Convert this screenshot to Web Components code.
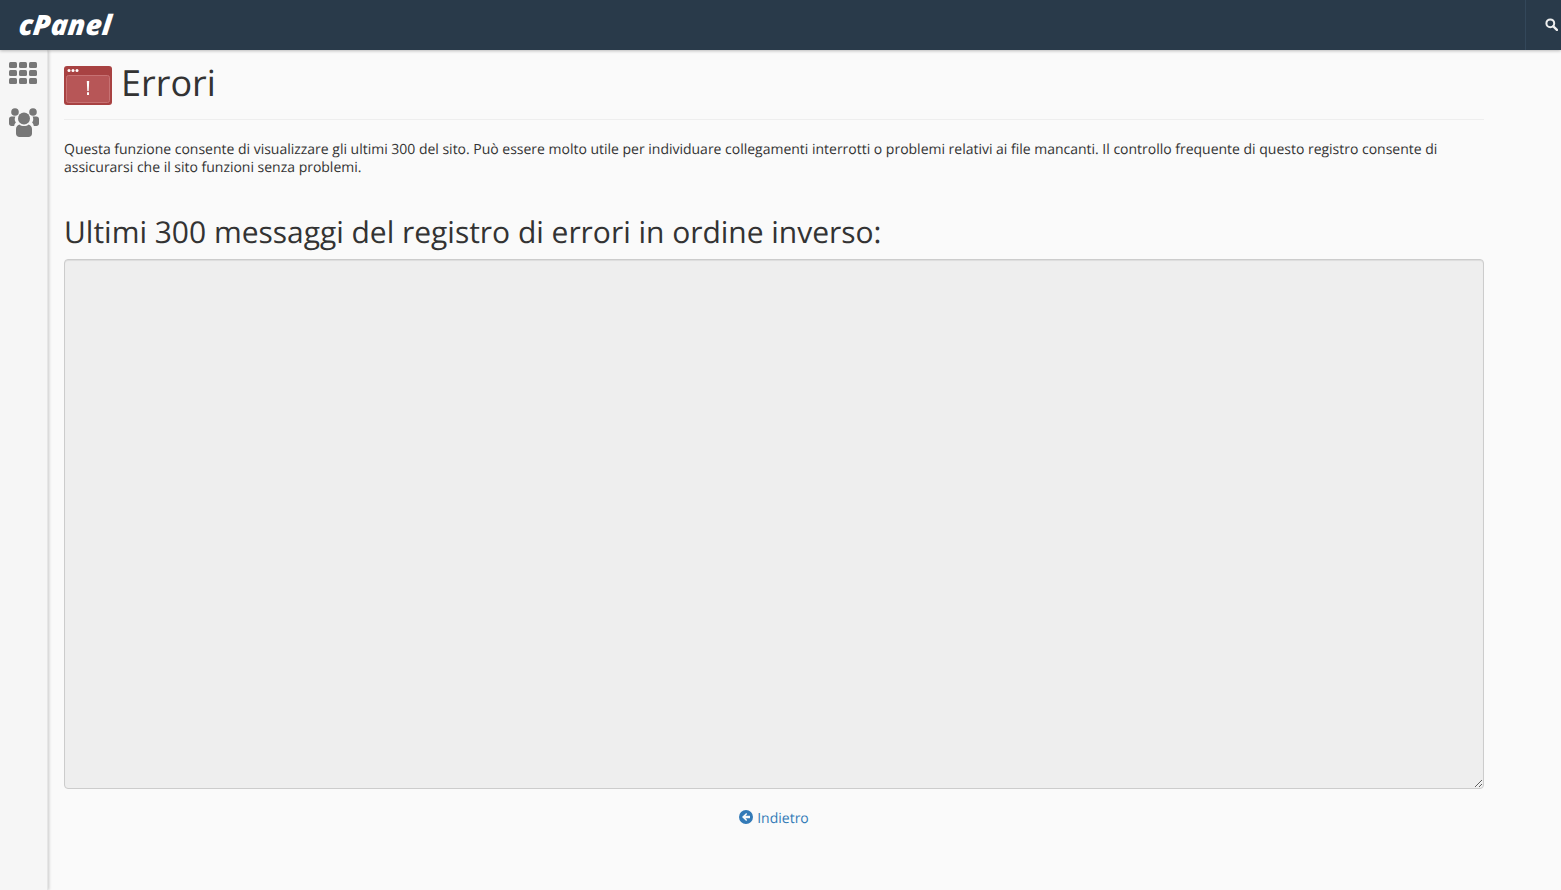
<!DOCTYPE html>
<html lang="it">
<head>
<meta charset="utf-8">
<title>Errori</title>
<style>
    html, body {
        margin: 0;
        height: 100%;
    }
    body {
        background: #fafafa;
        color: #333;
        font-family: "Open Sans", "Liberation Sans", sans-serif;
        font-size: 14px;
        text-rendering: geometricPrecision;
        overflow: hidden;
    }
</style>
</head>
<body>
<x-app>
    <x-topbar slot="top"></x-topbar>
    <x-sidebar slot="side"></x-sidebar>
    <x-page-header title-text="Errori"></x-page-header>
    <x-error-log></x-error-log>
</x-app>

<template id="appTemplate">
<style>
    :host {
        display: grid;
        grid-template-rows: 50px 1fr;
        grid-template-columns: 48px 1fr;
        height: 890px;
    }
    .top {
        grid-column: 1 / 3;
        position: relative;
        z-index: 2;
    }
    .side {
        position: relative;
        z-index: 1;
    }
    main {
        padding: 0 77px 0 16px;
        min-width: 0;
    }
</style>
<div class="top"><slot name="top"></slot></div>
<div class="side"><slot name="side"></slot></div>
<main><slot></slot></main>
</template>

<template id="topbarTemplate">
<style>
    :host {
        display: flex;
        align-items: center;
        justify-content: space-between;
        height: 50px;
        background: #293a4a;
        box-shadow: 0 1px 3px rgba(0, 0, 0, .25);
    }
    .logo {
        margin: 0 0 1px 19px;
        color: #fff;
        font: italic 800 28px/1 "Open Sans", "Liberation Sans", sans-serif;
        letter-spacing: .2px;
        transform: skewX(-6deg);
    }
    .search {
        display: flex;
        align-items: center;
        justify-content: center;
        box-sizing: border-box;
        width: 36px;
        height: 50px;
        padding: 0 0 2px 16px;
        border-left: 1px solid #33475a;
    }
</style>
<div class="logo">cPanel</div>
<div class="search">
    <svg width="13" height="13" viewBox="0 0 13 13" fill="none" stroke="#eee">
        <circle cx="5.3" cy="5.3" r="3.9" stroke-width="2"/>
        <path d="M8.3 8.3l3.6 3.6" stroke-width="2.4" stroke-linecap="round"/>
    </svg>
</div>
</template>

<template id="sidebarTemplate">
<style>
    :host {
        display: flex;
        flex-direction: column;
        align-items: center;
        box-sizing: border-box;
        height: 100%;
        padding: 12px 2px 0 0;
        gap: 24px;
        background: #f6f6f6;
        border-right: 1px solid #e6e6e6;
        box-shadow: 1px 0 3px rgba(0, 0, 0, .2);
    }
    svg {
        display: block;
        fill: #777;
    }
    .users {
        margin-left: 2px;
    }
</style>
<svg width="30" height="22" viewBox="0 0 30 22">
    <rect x="1" y="0" width="8" height="6" rx="1.5"/>
    <rect x="11" y="0" width="8" height="6" rx="1.5"/>
    <rect x="21" y="0" width="8" height="6" rx="1.5"/>
    <rect x="1" y="8" width="8" height="6" rx="1.5"/>
    <rect x="11" y="8" width="8" height="6" rx="1.5"/>
    <rect x="21" y="8" width="8" height="6" rx="1.5"/>
    <rect x="1" y="16" width="8" height="6" rx="1.5"/>
    <rect x="11" y="16" width="8" height="6" rx="1.5"/>
    <rect x="21" y="16" width="8" height="6" rx="1.5"/>
</svg>
<svg class="users" width="30" height="29" viewBox="0 0 30 29">
    <circle cx="6" cy="4" r="3.800"/>
    <circle cx="24" cy="4" r="3.800"/>
    <path d="M0 11c0-1.500 1-2.500 2.500-2.500h4c-.6 1-1 2.500-.6 4 .2.800.5 1.500 1 2.100-1 1-1.500 2-1.700 3.400H2.500C1 18 0 17 0 15.500z"/>
    <path d="M30 11c0-1.500-1-2.500-2.500-2.500h-4c.6 1 1 2.500.6 4-.2.800-.5 1.500-1 2.100 1 1 1.500 2 1.700 3.400h2.700c1.500 0 2.500-1 2.500-2.500z"/>
    <circle cx="15" cy="10.500" r="6"/>
    <path d="M10.300 16.500c1.300 1 2.800 1.500 4.700 1.500s3.400-.5 4.700-1.500c1.900.6 3.300 2.300 3.300 4.500v4.500c0 2-1.500 3.500-3.500 3.500h-9c-2 0-3.500-1.500-3.500-3.500V21c0-2.200 1.400-3.900 3.300-4.500z"/>
</svg>
</template>

<template id="pageHeaderTemplate">
<style>
    :host {
        display: flex;
        align-items: center;
        gap: 9px;
        height: 69px;
        padding-top: 0;
        border-bottom: 1px solid #eee;
    }
    svg {
        display: block;
        flex: none;
        margin-top: 2px;
    }
    h1 {
        margin: 0 0 4px;
        color: #333;
        font-size: 36px;
        font-weight: 400;
        line-height: 40px;
    }
</style>
<svg width="48" height="39" viewBox="0 0 48 39">
    <rect width="48" height="39" rx="3" fill="#a84242"/>
    <rect x="2.500" y="9.500" width="43" height="27" rx="2" fill="#b75657" stroke="#c77273"/>
    <circle cx="5" cy="4.500" r="1.500" fill="#fff"/>
    <circle cx="9" cy="4.500" r="1.500" fill="#fff"/>
    <circle cx="13" cy="4.500" r="1.500" fill="#fff"/>
    <path d="M22.800 15h2.400l-.5 10h-1.400zM23 26.300h2v2.700h-2z" fill="#fff"/>
</svg>
<h1></h1>
</template>

<template id="errorLogTemplate">
<style>
    :host {
        display: block;
    }
    p {
        margin: 21px 0 0;
        color: #333;
        font-size: 14px;
        line-height: 18px;
        letter-spacing: -.01px;
    }
    h2 {
        margin: 38px 0 11px;
        color: #333;
        font-size: 30px;
        font-weight: 400;
        line-height: 33px;
        letter-spacing: -.02px;
    }
    textarea {
        display: block;
        box-sizing: border-box;
        width: 100%;
        height: 530px;
        margin: 0;
        padding: 6px 12px;
        background: #eee;
        border: 1px solid #ccc;
        border-radius: 4px;
        box-shadow: inset 0 1px 1px rgba(0, 0, 0, .075);
        font: 14px "Open Sans", sans-serif;
    }
    .back {
        display: flex;
        justify-content: center;
        align-items: center;
        gap: 4px;
        margin-top: 20px;
        color: #337ab7;
        line-height: 20px;
    }
    .back svg {
        display: block;
        margin-top: -4px;
        fill: #337ab7;
    }
</style>
<p>Questa funzione consente di visualizzare gli ultimi 300 del sito. Può essere molto utile per individuare collegamenti interrotti o problemi relativi ai file mancanti. Il controllo frequente di questo registro consente di assicurarsi che il sito funzioni senza problemi.</p>
<h2>Ultimi 300 messaggi del registro di errori in ordine inverso:</h2>
<textarea readonly disabled></textarea>
<div class="back">
    <svg width="14" height="14" viewBox="0 0 14 14">
        <path fill-rule="evenodd" d="M7 0a7 7 0 1 1 0 14A7 7 0 0 1 7 0zM7.200 3L3 7l4.200 4 1-1-1.700-1.800H11V5.800H6.500L8.200 4z"/>
    </svg>
    <span>Indietro</span>
</div>
</template>

<script>
class App extends HTMLElement {
    constructor() {
        super();
        this.attachShadow({mode: 'open'});
        this.shadowRoot.appendChild(document.getElementById('appTemplate').content.cloneNode(true));
    }
}

class Topbar extends HTMLElement {
    constructor() {
        super();
        this.attachShadow({mode: 'open'});
        this.shadowRoot.appendChild(document.getElementById('topbarTemplate').content.cloneNode(true));
    }
}

class Sidebar extends HTMLElement {
    constructor() {
        super();
        this.attachShadow({mode: 'open'});
        this.shadowRoot.appendChild(document.getElementById('sidebarTemplate').content.cloneNode(true));
    }
}

class PageHeader extends HTMLElement {
    constructor() {
        super();
        this.attachShadow({mode: 'open'});
        this.shadowRoot.appendChild(document.getElementById('pageHeaderTemplate').content.cloneNode(true));
    }

    connectedCallback() {
        this.shadowRoot.querySelector('h1').textContent = this.getAttribute('title-text');
    }
}

class ErrorLog extends HTMLElement {
    constructor() {
        super();
        this.attachShadow({mode: 'open'});
        this.shadowRoot.appendChild(document.getElementById('errorLogTemplate').content.cloneNode(true));
    }
}

window.customElements.define('x-app', App);
window.customElements.define('x-topbar', Topbar);
window.customElements.define('x-sidebar', Sidebar);
window.customElements.define('x-page-header', PageHeader);
window.customElements.define('x-error-log', ErrorLog);
</script>
</body>
</html>
